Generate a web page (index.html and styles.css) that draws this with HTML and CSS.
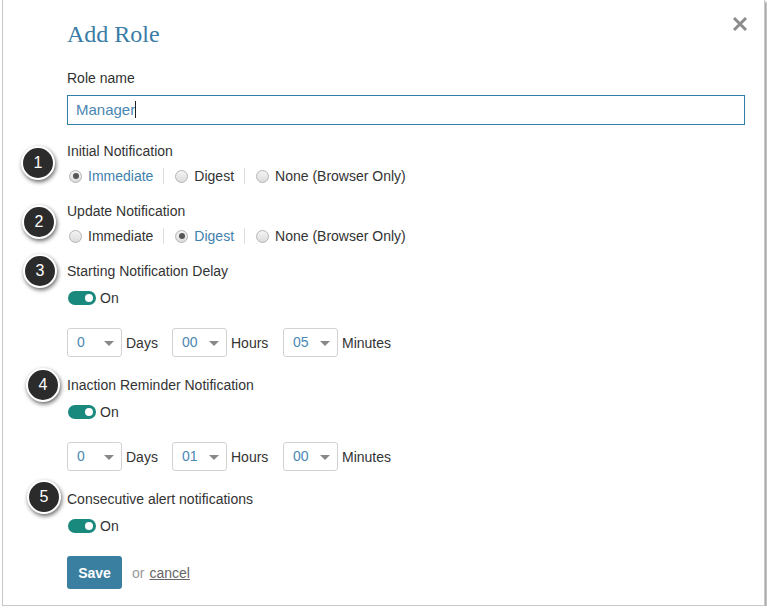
FILE: index.html
```html
<!DOCTYPE html>
<html>
<head>
	<meta charset="utf-8">
	<title>Add Role</title>
	<link rel="stylesheet" href="styles.css">
</head>
<body>
<div id="dialog">
	<a class="close" href="#">
		<svg width="16" height="16" viewBox="0 0 16 16"><path d="M2 2 L14 14 M14 2 L2 14" stroke="#8c8c8c" stroke-width="3"/></svg>
	</a>

	<span class="marker m1">1</span>
	<span class="marker m2">2</span>
	<span class="marker m3">3</span>
	<span class="marker m4">4</span>
	<span class="marker m5">5</span>

	<div class="content">
		<h1>Add Role</h1>

		<div class="field first">
			<label class="form_name">Role name</label>
			<div class="textbox">Manager<span class="caret"></span></div>
		</div>

		<div class="field">
			<label class="form_name">Initial Notification</label>
			<div class="radios">
				<span class="radio checked"><i></i>Immediate</span>
				<span class="sep"></span>
				<span class="radio"><i></i>Digest</span>
				<span class="sep"></span>
				<span class="radio"><i></i>None (Browser Only)</span>
			</div>
		</div>

		<div class="field after_radios">
			<label class="form_name">Update Notification</label>
			<div class="radios">
				<span class="radio"><i></i>Immediate</span>
				<span class="sep"></span>
				<span class="radio checked"><i></i>Digest</span>
				<span class="sep"></span>
				<span class="radio"><i></i>None (Browser Only)</span>
			</div>
		</div>

		<div class="field after_radios">
			<label class="form_name">Starting Notification Delay</label>
			<div class="toggle_row"><span class="toggle"></span>On</div>
			<div class="delay">
				<span class="select">0</span><span class="unit days">Days</span>
				<span class="select">00</span><span class="unit hours">Hours</span>
				<span class="select">05</span><span class="unit">Minutes</span>
			</div>
		</div>

		<div class="field after_delay">
			<label class="form_name">Inaction Reminder Notification</label>
			<div class="toggle_row"><span class="toggle"></span>On</div>
			<div class="delay">
				<span class="select">0</span><span class="unit days">Days</span>
				<span class="select">01</span><span class="unit hours">Hours</span>
				<span class="select">00</span><span class="unit">Minutes</span>
			</div>
		</div>

		<div class="field after_delay">
			<label class="form_name">Consecutive alert notifications</label>
			<div class="toggle_row"><span class="toggle"></span>On</div>
		</div>

		<div class="actions">
			<button class="save">Save</button>
			<span class="or">or</span>
			<a class="cancel" href="#">cancel</a>
		</div>
	</div>
</div>
</body>
</html>
```

FILE: styles.css
```css
body {
	margin: 0;
	background: #fff;
	font-family: "Liberation Sans", Arial, sans-serif;
	font-size: 14px;
	color: #333;
}
#dialog {
	position: relative;
	box-sizing: border-box;
	width: 763px;
	height: 606px;
	margin-left: 2px;
	background: #fff;
	border: 1px solid #c8c8c8;
	border-top: none;
	box-shadow: 2px 2px 2px rgba(0, 0, 0, 0.35);
}
.content {
	padding: 19px 19px 0 64px;
}
h1 {
	margin: 0;
	font-family: "Liberation Serif", "Times New Roman", serif;
	font-weight: normal;
	font-size: 24px;
	line-height: 30px;
	color: #3a7ca5;
}
.form_name {
	display: block;
	line-height: 20px;
	height: 20px;
}
.field {
	margin-top: 16px;
}
.field.first {
	margin-top: 19px;
}
.field.after_radios {
	margin-top: 15px;
}
.field.after_delay {
	margin-top: 18px;
}
.textbox {
	box-sizing: border-box;
	margin-top: 7px;
	height: 30px;
	padding: 0 8px;
	line-height: 28px;
	border: 1px solid #2f7ea6;
	color: #4a87b3;
	font-size: 15px;
}
.caret {
	display: inline-block;
	width: 1px;
	height: 17px;
	background: #222;
	vertical-align: -3px;
}
.radios {
	display: flex;
	align-items: center;
	height: 20px;
	margin-top: 5px;
}
.radio {
	display: flex;
	align-items: center;
	white-space: nowrap;
}
.radio i {
	box-sizing: border-box;
	width: 13px;
	height: 13px;
	margin: 0 6px 0 2px;
	border: 1px solid #b4b4b4;
	border-radius: 50%;
	background: linear-gradient(#f4f4f4, #dcdcdc);
	position: relative;
}
.radio.checked {
	color: #3f80ad;
}
.radio.checked i::after {
	content: "";
	position: absolute;
	left: 2.5px;
	top: 2.5px;
	width: 6px;
	height: 6px;
	border-radius: 50%;
	background: #555;
}
.sep {
	width: 1px;
	height: 16px;
	background: #ddd;
	margin: 0 9px 0 10px;
}
.toggle_row {
	display: flex;
	align-items: center;
	height: 20px;
	margin-top: 7px;
}
.toggle {
	position: relative;
	width: 28px;
	height: 14px;
	margin: 0 4px 0 1px;
	border-radius: 7px;
	background: #19897e;
}
.toggle::after {
	content: "";
	position: absolute;
	right: 3px;
	top: 3px;
	width: 8px;
	height: 8px;
	border-radius: 50%;
	background: #fff;
}
.delay {
	display: flex;
	align-items: center;
	margin-top: 20px;
}
.select {
	position: relative;
	box-sizing: border-box;
	width: 55px;
	height: 29px;
	padding-left: 9px;
	line-height: 27px;
	border: 1px solid #d2d2d2;
	border-radius: 3px;
	color: #4a87b3;
}
.select::after {
	content: "";
	position: absolute;
	right: 7px;
	top: 12px;
	border-left: 5px solid transparent;
	border-right: 5px solid transparent;
	border-top: 5px solid #888;
}
.unit {
	margin-left: 4px;
}
.unit.days {
	width: 46px;
}
.unit.hours {
	width: 52px;
}
.actions {
	display: flex;
	align-items: center;
	margin-top: 20px;
}
.save {
	width: 55px;
	height: 33px;
	border: none;
	border-radius: 3px;
	background: #3b7fa0;
	color: #fff;
	font-family: "Liberation Sans", Arial, sans-serif;
	font-weight: bold;
	font-size: 14px;
}
.or {
	color: #9a9a9a;
	margin-left: 10px;
}
.cancel {
	color: #666;
	margin-left: 5px;
}
.close {
	position: absolute;
	right: 16px;
	top: 16px;
}
.marker {
	position: absolute;
	box-sizing: border-box;
	width: 34px;
	height: 34px;
	border: 2px solid #fff;
	border-radius: 50%;
	background: #2b2b2b;
	color: #fff;
	font-size: 16px;
	line-height: 30px;
	text-align: center;
	box-shadow: 1px 2px 4px rgba(0, 0, 0, 0.6);
}
.m1 { left: 18px; top: 146px; }
.m2 { left: 19px; top: 205px; }
.m3 { left: 20px; top: 254px; }
.m4 { left: 23px; top: 368px; }
.m5 { left: 24px; top: 480px; }
```
